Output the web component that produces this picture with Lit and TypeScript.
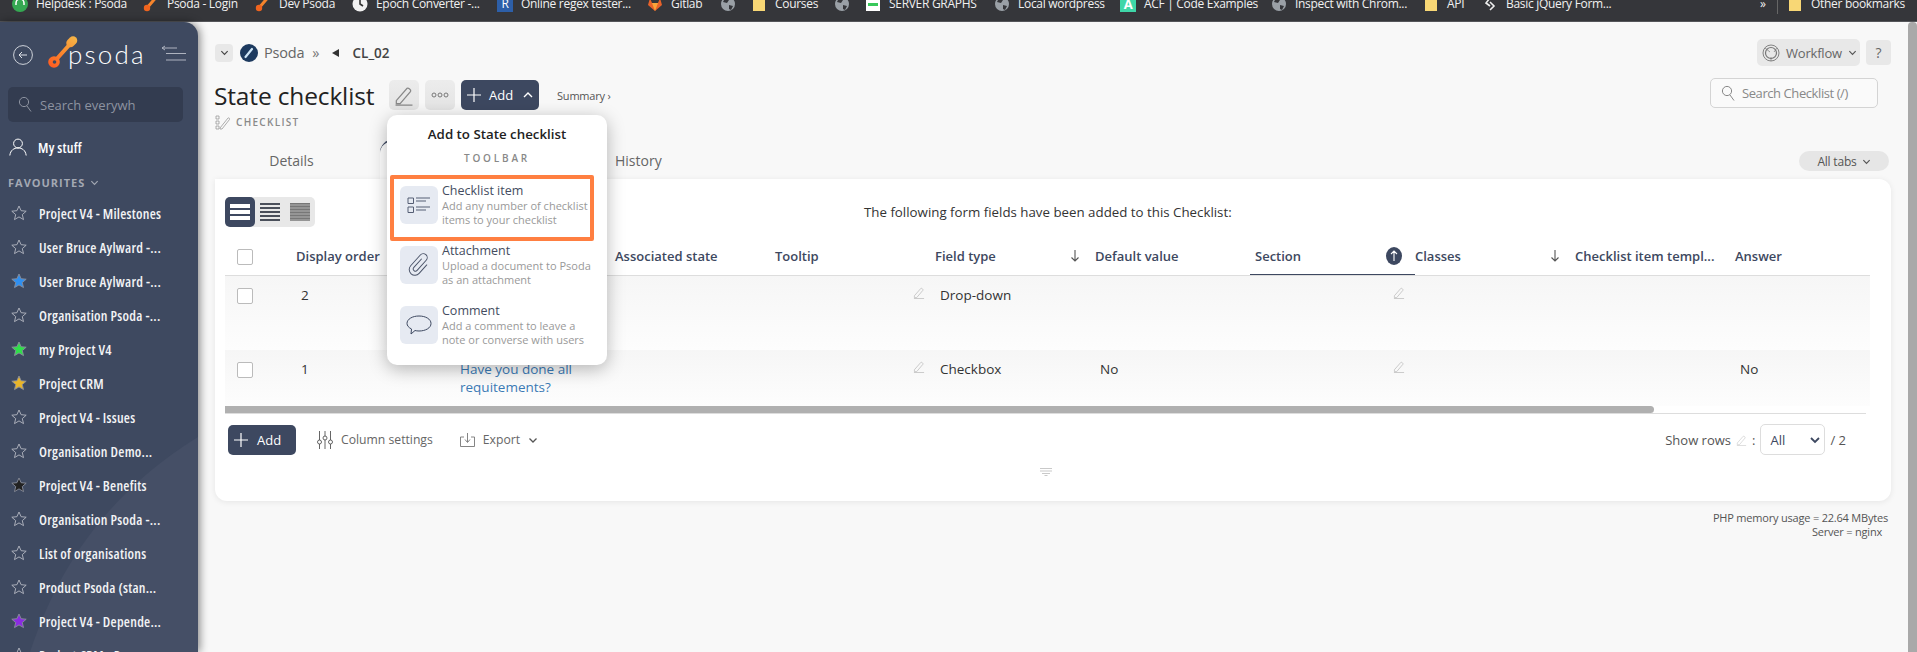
import { LitElement, html, css } from "lit";
import { customElement } from "lit/decorators.js";

const paddle = (s = 16) => html`<svg width=${s} height=${s} viewBox="0 0 16 16"><path d="M3.5 12.5 12.5 2" stroke="#f5842c" stroke-width="3" stroke-linecap="round" fill="none"/><circle cx="4" cy="12" r="3.2" fill="#f0641e"/></svg>`;
const globe = html`<svg width="16" height="16" viewBox="0 0 16 16"><circle cx="8" cy="8" r="7" fill="#9aa0a6"/><path d="M5 2 9 4 7 7 3 6ZM9 9l4 1-2 4-2-1Z" fill="#35363a"/></svg>`;
const folder = html`<svg width="16" height="16" viewBox="0 0 16 16"><path d="M2 1h12v14H2Z" fill="#f8d775"/></svg>`;

const BOOKMARKS: [any, string, number, number][] = [
  [html`<svg width="16" height="16" viewBox="0 0 16 16"><circle cx="8" cy="8" r="8" fill="#35a852"/><path d="M4 9V7a4 4 0 0 1 8 0v2" stroke="#fff" fill="none" stroke-width="1.5"/></svg>`, "Helpdesk : Psoda", 12, 90],
  [paddle(), "Psoda - Login", 143, 73],
  [paddle(), "Dev Psoda", 255, 56],
  [html`<svg width="16" height="16" viewBox="0 0 16 16"><circle cx="8" cy="8" r="7.5" fill="#f1f1f1"/><path d="M8 3v5l3 2" stroke="#333" stroke-width="1.6" fill="none"/></svg>`, "Epoch Converter -...", 352, 104],
  [html`<span class="rsq">R</span>`, "Online regex tester...", 497, 110],
  [html`<svg width="16" height="16" viewBox="0 0 16 16"><path d="M8 15 1 9l2-7 2 5h6l2-5 2 7Z" fill="#e8622a"/><path d="M8 15 5 7h6Z" fill="#f9a43a"/></svg>`, "Gitlab", 647, 31],
  [globe, "", 720, 0],
  [folder, "Courses", 751, 42],
  [globe, "", 834, 0],
  [html`<svg width="16" height="16" viewBox="0 0 16 16"><path d="M1 3h14v12H1Z" fill="#fff"/><path d="M3 7h10v3H3Z" fill="#38c85a"/><path d="M1 3 8 0l7 3Z" fill="#1c6b34"/></svg>`, "SERVER GRAPHS", 865, 88],
  [globe, "Local wordpress", 994, 85],
  [html`<span class="asq">A</span>`, "ACF | Code Examples", 1120, 110],
  [globe, "Inspect with Chrom...", 1271, 111],
  [folder, "API", 1423, 18],
  [html`<svg width="16" height="16" viewBox="0 0 16 16"><path d="M8 2 4 7l4 3M8 6l4 4-4 4" stroke="#eee" stroke-width="1.6" fill="none"/></svg>`, "Basic jQuery Form...", 1482, 103],
];

const FAVS: [string, string][] = [
  ["Project V4 - Milestones", "none"],
  ["User Bruce Aylward -...", "none"],
  ["User Bruce Aylward -...", "#2f8ff0"],
  ["Organisation Psoda -...", "none"],
  ["my Project V4", "#2fe04a"],
  ["Project CRM", "#e8b52a"],
  ["Project V4 - Issues", "none"],
  ["Organisation Demo...", "none"],
  ["Project V4 - Benefits", "#222"],
  ["Organisation Psoda -...", "none"],
  ["List of organisations", "none"],
  ["Product Psoda (stan...", "none"],
  ["Project V4 - Depende...", "#8a2be2"],
  ["Project CRM - Progr...", "none"],
];

const star = (fill: string) => html`<svg width="16" height="16" viewBox="0 0 16 16"><path d="M8 1l2.1 4.7 5.1.5-3.9 3.4 1.2 5L8 11.900l-4.500 2.700 1.200-5L.8 6.200l5.100-.5Z" fill=${fill} stroke=${fill === "none" ? "#b4b8c2" : "#8a8f9c"} stroke-width=".9" stroke-linejoin="round"/></svg>`;
const pencil = (c = "#bbb", s = 12) => html`<svg class="pen" width=${s} height=${s} viewBox="0 0 13 13"><path d="M1.5 9.5 8.5 1.5c.8-.6 2.800 1 2.300 2L4 11.500H1.500ZM1 12.500h11" fill="none" stroke=${c} stroke-width=".8"/></svg>`;
const chevron = (c = "#555", s = 9) => html`<svg width=${s} height=${s} viewBox="0 0 10 10"><path d="M1.5 3.5 5 7l3.5-3.5" fill="none" stroke=${c} stroke-width="1.3"/></svg>`;
const down = html`<svg width="10" height="14" viewBox="0 0 10 14"><path d="M5 1v11M1.5 8.5 5 12l3.5-3.5" fill="none" stroke="#555" stroke-width="1.1"/></svg>`;
const plus = html`<svg width="16" height="16" viewBox="0 0 16 16"><path d="M8 1v14M1 8h14" stroke="#fff" stroke-width="1.2"/></svg>`;
const mag = (c: string) => html`<svg width="15" height="17" viewBox="0 0 15 17"><circle cx="6" cy="6" r="4.6" fill="none" stroke=${c} stroke-width="1"/><path d="M9 10l4 5.5" stroke=${c} stroke-width="1"/></svg>`;

const COLS = ["Display order", "", "Associated state", "Tooltip", "Field type", "Default value", "Section", "Classes", "Checklist item templ...", "Answer"];

@customElement("app-root")
export class AppRoot extends LitElement {
  static styles = css`
    :host { display: block; width: 1917px; height: 652px; overflow: hidden; font-family: "Open Sans", sans-serif; color: #333; background: #f8f8f8; }
    .bookmarks { position: relative; height: 21px; background: #35363a; border-bottom: 1px solid #55565a; overflow: hidden; color: #f1f1f1; font-size: 12px; letter-spacing: -.3px; }
    .bm { position: absolute; top: 0; height: 7px; display: flex; align-items: center; gap: 8px; white-space: nowrap; }
    .rsq { width: 16px; height: 16px; background: #2d5fa8; color: #fff; font-size: 12px; text-align: center; line-height: 16px; flex: none; }
    .asq { width: 16px; height: 16px; background: #3fd6a8; color: #fff; font-size: 13px; font-weight: 700; text-align: center; line-height: 16px; flex: none; }
    .layout { display: flex; height: 630px; }
    .sidebar { position: relative; width: 198px; flex: none; background: #3e4960; border-top-right-radius: 14px; box-shadow: 2px 0 9px rgba(0,0,0,.45); overflow: hidden; z-index: 2; }
    .swoosh { position: absolute; left: 0; top: 0; }
    .side-in { position: relative; padding: 0 8px; }
    .brand { height: 65px; display: flex; align-items: center; position: relative; }
    .back { margin-left: 5px; width: 20px; height: 20px; }
    .logo { margin-left: 12px; position: relative; width: 100px; height: 40px; }
    .logo svg { position: absolute; left: 3px; top: 0; }
    .logo span { position: absolute; left: 23px; top: 4px; font-family: "Lato", sans-serif; font-weight: 300; font-size: 26px; line-height: 30px; color: #fff; letter-spacing: 2.200px; }
    .collapse { position: absolute; left: 152px; top: 22px; }
    .search { height: 35px; width: 175px; background: #333c50; border-radius: 5px; display: flex; align-items: center; gap: 7px; padding-left: 10px; box-sizing: border-box; color: #8d93a0; font-size: 13px; }
    .mine { display: flex; align-items: center; gap: 11px; height: 30px; margin-top: 10px; padding-left: 1px; color: #fff; font-size: 14px; font-stretch: 85%; font-weight: 600; letter-spacing: .25px; }
    .favh { display: flex; align-items: center; gap: 5px; margin-top: 11px; height: 18px; color: #a3a8b3; font-size: 11px; font-weight: 700; letter-spacing: 1px; }
    .favs { margin-top: 5px; }
    .fav { display: flex; align-items: center; gap: 12px; height: 34px; padding-left: 3px; color: #f2f3f5; font-size: 14px; font-stretch: 85%; font-weight: 600; letter-spacing: .25px; white-space: nowrap; }
    .fav svg { flex: none; }
    .main { position: relative; flex: 1; min-width: 0; display: flex; }
    .content { flex: 1; min-width: 0; padding: 17px 17px 0; }
    .vbar { width: 9px; flex: none; background: #a9a9a9; border-top-left-radius: 4px; border-top-right-radius: 4px; }
    .crumbs { display: flex; align-items: center; height: 27px; color: #666; font-size: 14.5px; }
    .dd { width: 18px; height: 18px; border-radius: 4px; background: #e8e8e8; display: flex; align-items: center; justify-content: center; }
    .brandmark { margin-left: 7px; }
    .crumbs .p { margin-left: 6px; letter-spacing: -.2px; }
    .crumbs .gt { margin-left: 8px; color: #777; }
    .crumbs .tri { margin-left: 13px; width: 0; height: 0; border: 4.5px solid transparent; border-right: 7px solid #333; border-left: 0; }
    .crumbs .code { margin-left: 13px; color: #444; font-size: 13.500px; font-weight: 600; }
    .spacer { flex: 1; }
    .wf { display: flex; align-items: center; gap: 6px; width: 103px; height: 27px; box-sizing: border-box; padding-left: 5px; background: #e8e8e8; border-radius: 5px; color: #666; font-size: 13px; letter-spacing: -.2px; }
    .help { margin-left: 6px; width: 25px; height: 25px; background: #e8e8e8; border-radius: 4px; text-align: center; line-height: 25px; font-size: 14px; color: #666; }
    .titlerow { display: flex; align-items: flex-start; height: 32px; margin-top: 12px; }
    h1 { margin: 0 0 0 -1px; font-size: 24.500px; font-weight: 500; line-height: 36px; color: #222; width: 162px; white-space: nowrap; letter-spacing: -.15px; }
    .ib { margin-top: 2px; height: 30px; width: 30px; background: linear-gradient(#ececec,#e4e4e4); border-radius: 5px; display: flex; align-items: center; justify-content: center; }
    .ib.first { margin-left: 13px; }
    .ib.second { margin-left: 6px; }
    .addtop { margin: 2px 0 0 6px; width: 78px; height: 30px; display: flex; align-items: center; gap: 7px; padding-left: 5px; box-sizing: border-box; background: #3d4860; border-radius: 5px; color: #fff; font-size: 13px; font-weight: 500; }
    .summary { margin: 10px 0 0 18px; font-size: 11px; color: #555; letter-spacing: -.2px; }
    .sbox { width: 168px; height: 30px; margin-right: 13px; box-sizing: border-box; background: #fafafa; border: 1px solid #d4d4d4; border-radius: 5px; display: flex; align-items: center; gap: 6px; padding-left: 10px; color: #888; font-size: 13px; letter-spacing: -.42px; }
    .sub { display: flex; align-items: center; gap: 6px; height: 16px; margin-top: 4px; font-size: 10px; font-weight: 600; letter-spacing: 1.300px; color: #8a8a8a; }
    .tabs { display: flex; height: 40px; margin-top: 9px; font-size: 14px; color: #666; align-items: center; }
    .tab1 { width: 153px; text-align: center; margin-top: 3px; }
    .tab2 { margin-left: 12px; width: 220px; height: 40px; background: #fff; border-top: 2px solid #3d4860; box-sizing: border-box; border-radius: 14px 14px 0 0; }
    .tab3 { margin-left: 15px; margin-top: 3px; }
    .alltabs { margin-left: auto; width: 90px; height: 20px; border-radius: 10px; background: #e6e6e6; display: flex; align-items: center; justify-content: center; gap: 5px; font-size: 12px; color: #555; letter-spacing: -.2px; margin-right: 2px; margin-top: 4px; }
    .card { height: 322px; box-sizing: border-box; background: #fff; border-radius: 0 12px 12px 12px; box-shadow: 0 1px 6px rgba(0,0,0,.08); padding: 18px 21px 0 10px; position: relative; }
    .introrow { display: flex; align-items: center; height: 30px; }
    .toggle { width: 90px; height: 30px; background: #e8e8e8; border-radius: 5px; display: flex; flex: none; }
    .tcell { width: 30px; height: 30px; display: flex; align-items: center; justify-content: center; border-radius: 5px; }
    .tcell.on { background: #3d4860; }
    .intro { margin-left: 549px; font-size: 13.300px; color: #333; white-space: nowrap; }
    .grid { display: grid; grid-template-columns: 71px 159px repeat(8,160px) 135px; overflow: hidden; }
    .head { margin-top: 11px; height: 38px; border-bottom: 1px solid #ddd; box-sizing: border-box; align-items: stretch; }
    .hc { display: flex; align-items: center; justify-content: space-between; padding-right: 15px; padding-bottom: 3px; font-size: 13px; font-weight: 600; color: #3d4860; white-space: nowrap; box-sizing: border-box; }
    .hc.sorted { margin-left: -5px; padding-left: 5px; padding-bottom: 1px; border-bottom: 2px solid #3d4860; height: 38px; }
    .hc.first { padding-left: 12px; padding-bottom: 1px; }
    .hc.long { padding-right: 0; overflow: hidden; }
    .circ { width: 16px; height: 18px; border-radius: 50%; background: #3d4860; display: flex; align-items: center; justify-content: center; margin-right: -2px; }
    .row { background: linear-gradient(#f6f6f6,#fdfdfd); font-size: 13.5px; color: #333; }
    .r1 { height: 74px; }
    .r2 { height: 56px; }
    .dc { display: flex; justify-content: space-between; padding: 10px 10px 0 5px; line-height: 18px; box-sizing: border-box; white-space: nowrap; }
    .dc.first { padding-left: 12px; padding-top: 12px; }
    .box { width: 16px; height: 16px; box-sizing: border-box; border: 1px solid #bbb; border-radius: 2px; background: #fff; display: block; }
    .link { color: #3b7ab5; white-space: normal; }
    .pen { margin-top: 1px; flex: none; }
    .hscroll { height: 7px; border-bottom: 1px solid #ddd; width: 1641px; }
    .thumb { height: 7px; width: 1429px; background: #b0b0b0; border-radius: 0 4px 4px 0; }
    .foot { display: flex; align-items: center; height: 31px; margin-top: 10px; font-size: 12.2px; color: #666; }
    .addbot { margin-left: 3px; width: 68px; height: 30px; display: flex; align-items: center; gap: 8px; padding-left: 5px; box-sizing: border-box; background: #3d4860; border-radius: 5px; color: #fff; font-weight: 500; font-size: 13px; }
    .fi { display: flex; align-items: center; gap: 8px; }
    .rows { display: flex; align-items: center; margin-left: auto; color: #555; margin-right: 24px; gap: 5px; font-size: 13px; }
    .sel { width: 65px; height: 31px; box-sizing: border-box; border: 1px solid #ddd; border-radius: 5px; display: flex; align-items: center; justify-content: space-between; padding: 0 4px 0 9px; color: #3d4860; background: #fff; }
    .handle { display: flex; justify-content: center; margin-top: 13px; margin-left: -3px; }
    .mem { text-align: right; font-size: 11px; line-height: 14px; color: #555; margin: 10px 3px 0 0; letter-spacing: -.2px; }
    .mem div:last-child { padding-right: 6px; }
    .popup { position: absolute; left: 189px; top: 93px; width: 220px; height: 250px; box-sizing: border-box; background: #fff; border-radius: 10px; box-shadow: 0 4px 18px rgba(0,0,0,.28); padding-top: 8px; z-index: 3; }
    .ptitle { text-align: center; font-size: 13.3px; font-weight: 600; line-height: 22px; color: #222; }
    .ptool { margin-top: 5px; text-align: center; font-size: 10px; font-weight: 600; line-height: 16px; letter-spacing: 2.8px; color: #888; }
    .items { margin-top: 10px; }
    .item { position: relative; height: 60px; box-sizing: border-box; padding: 10px 0 0 13px; display: flex; gap: 4px; }
    .item.hl::after { content: ""; position: absolute; left: 3px; right: 13px; top: -1px; bottom: -5px; border: 4px solid #ff7f41; border-radius: 2px; }
    .icn { width: 38px; height: 38px; border-radius: 6px; background: #e6eaf2; display: flex; align-items: center; justify-content: center; flex: none; }
    .itx { margin-top: -3px; }
    .itt { font-size: 12.5px; line-height: 16px; font-weight: 500; color: #444c60; }
    .itd { font-size: 11px; line-height: 14px; color: #999; white-space: nowrap; }
  `;

  render() {
    return html`
      <div class="bookmarks">
        ${BOOKMARKS.map(([ic, t, x, w]) => html`<div class="bm" style="left:${x}px">${ic}${t ? html`<span style="width:${w}px">${t}</span>` : ""}</div>`)}
        <div class="bm" style="left:1760px">»</div>
        <div class="bm" style="left:1777px;height:14px;width:1px;background:#666"></div>
        <div class="bm" style="left:1787px">${folder}<span>Other bookmarks</span></div>
      </div>
      <div class="layout">
        <aside class="sidebar">
          <svg class="swoosh" width="198" height="630"><path d="M30 630C60 540 110 470 198 415V630Z" fill="#454f66"/></svg>
          <div class="side-in">
            <div class="brand">
              <svg class="back" viewBox="0 0 20 20"><circle cx="10" cy="10" r="9.4" fill="none" stroke="#dfe2e8" stroke-width=".9"/><path d="M14 10H6M9 7l-3 3 3 3" fill="none" stroke="#dfe2e8" stroke-width="1"/></svg>
              <div class="logo">
                <svg width="40" height="40" viewBox="0 0 40 40"><defs><linearGradient id="lg" gradientUnits="userSpaceOnUse" x1="2" y1="32" x2="28" y2="2"><stop offset="0" stop-color="#ff5a20"/><stop offset=".5" stop-color="#fb8a2e"/><stop offset="1" stop-color="#f5b648"/></linearGradient></defs><path d="M25 5.500 22.500 8" stroke="url(#lg)" stroke-width="8.500" stroke-linecap="round"/><path d="M23 8 6 27" stroke="url(#lg)" stroke-width="4" stroke-linecap="round"/><circle cx="6" cy="27" r="5.800" fill="url(#lg)"/><circle cx="6.500" cy="27" r="1.800" fill="#3e4960"/></svg>
                <span>psoda</span>
              </div>
              <svg class="collapse" width="34" height="22" viewBox="0 0 34 22"><path d="M2 4h15M2 4l3-2M2 4l3 2M6 9.500h20M6 16h20" fill="none" stroke="#aeb3bf" stroke-width="1"/></svg>
            </div>
            <div class="search">${mag("#8d93a0")}<span>Search everywh</span></div>
            <div class="mine"><svg width="18" height="18" viewBox="0 0 18 18"><circle cx="9" cy="5.5" r="4.4" fill="none" stroke="#fff" stroke-width="1"/><path d="M.8 17.5C1.5 12 5 10 9 10s7.500 2 8.200 7.500" fill="none" stroke="#fff" stroke-width="1"/></svg><span>My stuff</span></div>
            <div class="favh"><span>FAVOURITES</span>${chevron("#a3a8b3")}</div>
            <div class="favs">${FAVS.map(([t, c]) => html`<div class="fav">${star(c)}<span>${t}</span></div>`)}</div>
          </div>
        </aside>
        <main class="main">
          <div class="content">
            <div class="crumbs">
              <span class="dd">${chevron("#444")}</span>
              <svg class="brandmark" width="18" height="18" viewBox="0 0 18 18"><circle cx="9" cy="9" r="9" fill="#1d3a5f"/><path d="M5.500 13 12 5" stroke="#cfe6f7" stroke-width="2.200" stroke-linecap="round"/></svg>
              <span class="p">Psoda</span><span class="gt">»</span><span class="tri"></span><span class="code">CL_02</span>
              <span class="spacer"></span>
              <span class="wf"><svg width="18" height="18" viewBox="0 0 18 18"><circle cx="9" cy="9" r="8" fill="none" stroke="#777" stroke-width=".9"/><circle cx="9" cy="9" r="5.500" fill="none" stroke="#777" stroke-width="1.200"/><path d="M3 4 8 8M15 4l-3 4M9 17V13" stroke="#777" stroke-width=".7"/></svg><span>Workflow</span>${chevron("#555")}</span>
              <span class="help">?</span>
            </div>
            <div class="titlerow">
              <h1>State checklist</h1>
              <span class="ib first">${pencil("#888", 20)}</span>
              <span class="ib second"><svg width="18" height="8" viewBox="0 0 18 8"><g fill="none" stroke="#777" stroke-width="1"><circle cx="3" cy="4" r="2"/><circle cx="9" cy="4" r="2"/><circle cx="15" cy="4" r="2"/></g></svg></span>
              <span class="addtop">${plus}<span>Add</span><svg style="margin-left:3px" width="10" height="10" viewBox="0 0 10 10"><path d="M1 7l4-4 4 4" fill="none" stroke="#fff" stroke-width="1.400"/></svg></span>
              <span class="summary">Summary ›</span>
              <span class="spacer"></span>
              <span class="sbox">${mag("#888")}<span>Search Checklist (/)</span></span>
            </div>
            <div class="sub"><svg width="15" height="15" viewBox="0 0 15 15"><path d="M1 1h3v3H1ZM1 6h3v3H1ZM1 11h3v3H1ZM5 13 13 3c1-.6 2 .6 1.500 1.500L7 14H5Z" fill="none" stroke="#999" stroke-width=".8"/></svg><span>CHECKLIST</span></div>
            <div class="tabs">
              <span class="tab1">Details</span><span class="tab2"></span><span class="tab3">History</span>
              <span class="alltabs"><span>All tabs</span>${chevron("#555")}</span>
            </div>
            <section class="card">
              <div class="introrow">
                <div class="toggle">
                  <span class="tcell on"><svg width="20" height="18" viewBox="0 0 20 18"><path d="M0 1h20v4H0ZM0 7h20v4H0ZM0 13h20v4H0Z" fill="#fff"/></svg></span>
                  <span class="tcell"><svg width="20" height="18" viewBox="0 0 20 18"><path d="M0 0h20v2H0ZM0 4h20v2H0ZM0 8h20v2H0ZM0 12h20v2H0ZM0 16h20v2H0Z" fill="#4a4f5a"/></svg></span>
                  <span class="tcell"><svg width="20" height="18" viewBox="0 0 20 18"><path d="M0 0h20v18H0Z" fill="#777"/><path d="M0 2h20M0 5h20M0 8h20M0 11h20M0 14h20M0 17h20" stroke="#ddd" stroke-width=".6"/></svg></span>
                </div>
                <span class="intro">The following form fields have been added to this Checklist:</span>
              </div>
              <div class="grid head">
                <div class="hc first"><span class="box"></span></div>
                ${COLS.map((c, i) => html`<div class="hc ${i === 6 ? "sorted" : ""} ${i === 8 ? "long" : ""}"><span>${c}</span>${i === 4 || i === 7 ? down : ""}${i === 6 ? html`<span class="circ"><svg width="8" height="12" viewBox="0 0 8 12"><path d="M4 11V1M1 4l3-3 3 3" fill="none" stroke="#fff" stroke-width="1.100"/></svg></span>` : ""}</div>`)}
              </div>
              ${[
                { n: "2", cls: "r1", link: "", type: "Drop-down", def: "", ans: "" },
                { n: "1", cls: "r2", link: "Have you done all requitements?", type: "Checkbox", def: "No", ans: "No" },
              ].map((r) => html`
                <div class="grid row ${r.cls}">
                  <div class="dc first"><span class="box"></span></div>
                  <div class="dc"><span>${r.n}</span></div>
                  <div class="dc"><span class="link">${r.link}</span></div>
                  <div class="dc"></div>
                  <div class="dc"><span></span>${pencil()}</div>
                  <div class="dc"><span>${r.type}</span></div>
                  <div class="dc"><span>${r.def}</span></div>
                  <div class="dc"><span></span>${pencil()}</div>
                  <div class="dc"></div>
                  <div class="dc"></div>
                  <div class="dc"><span>${r.ans}</span></div>
                </div>`)}
              <div class="hscroll"><div class="thumb"></div></div>
              <div class="foot">
                <span class="addbot">${plus}<span>Add</span></span>
                <span class="fi" style="margin-left:21px"><svg width="16" height="18" viewBox="0 0 16 18"><g fill="#fff" stroke="#555" stroke-width=".9"><path d="M2.500 0v18M8 0v18M13.500 0v18"/><circle cx="2.500" cy="11" r="2"/><circle cx="8" cy="7" r="2"/><circle cx="13.500" cy="11" r="2"/></g></svg><span>Column settings</span></span>
                <span class="fi" style="margin-left:27px"><svg width="15" height="15" viewBox="0 0 15 15"><path d="M4 5H.5v9.500h14V5H11M7.500 1v9M5 7.500l2.500 3 2.500-3" fill="none" stroke="#777" stroke-width=".9"/></svg><span>Export</span>${chevron("#555", 10)}</span>
                <span class="rows"><span>Show rows</span>${pencil("#ccc", 11)}<span>:</span><span class="sel"><span>All</span><svg width="10" height="10" viewBox="0 0 10 10"><path d="M1 3l4 4 4-4" fill="none" stroke="#3d4860" stroke-width="1.800"/></svg></span><span>/ 2</span></span>
              </div>
              <div class="handle"><svg width="12" height="8" viewBox="0 0 12 8"><path d="M0 .5h12M0 3h12M2 5.500h8M4.500 7.500h3" stroke="#bbb" stroke-width=".8"/></svg></div>
            </section>
            <div class="mem"><div>PHP memory usage = 22.64 MBytes</div><div>Server = nginx</div></div>
          </div>
          <div class="vbar"></div>
          <div class="popup">
            <div class="ptitle">Add to State checklist</div>
            <div class="ptool">TOOLBAR</div>
            <div class="items">
              <div class="item hl"><span class="icn"><svg width="24" height="18" viewBox="0 0 24 18"><path d="M1 2h5.500v5.500H1ZM1 11h5.500v5.500H1Z" fill="none" stroke="#555e74" stroke-width="1"/><path d="M9 2h14M9 5h10M9 11h14M9 14h10" stroke="#555e74" stroke-width="1"/></svg></span><div class="itx"><div class="itt">Checklist item</div><div class="itd">Add any number of checklist<br>items to your checklist</div></div></div>
              <div class="item"><span class="icn"><svg width="28" height="28" viewBox="0 0 32 32"><g transform="translate(16 16) rotate(42) translate(-9.500 -15)"><path d="M7 8v13a2.500 2.500 0 0 0 5 0V5.500a4.500 4.500 0 0 0-9 0V22a6.500 6.500 0 0 0 13 0V9" fill="none" stroke="#4a5368" stroke-width="1.100" stroke-linecap="round"/></g></svg></span><div class="itx"><div class="itt">Attachment</div><div class="itd">Upload a document to Psoda<br>as an attachment</div></div></div>
              <div class="item"><span class="icn"><svg width="26" height="20" viewBox="0 0 26 20"><path d="M13 1c6.500 0 12 3 12 7.500S19.500 16 13 16c-1.500 0-3-.2-4-.5L5 19l.5-5C2.500 12.500 1 10.500 1 8.500 1 4 6.500 1 13 1Z" fill="none" stroke="#3d4860" stroke-width="1"/></svg></span><div class="itx"><div class="itt">Comment</div><div class="itd">Add a comment to leave a<br>note or converse with users</div></div></div>
            </div>
          </div>
        </main>
      </div>
    `;
  }
}
